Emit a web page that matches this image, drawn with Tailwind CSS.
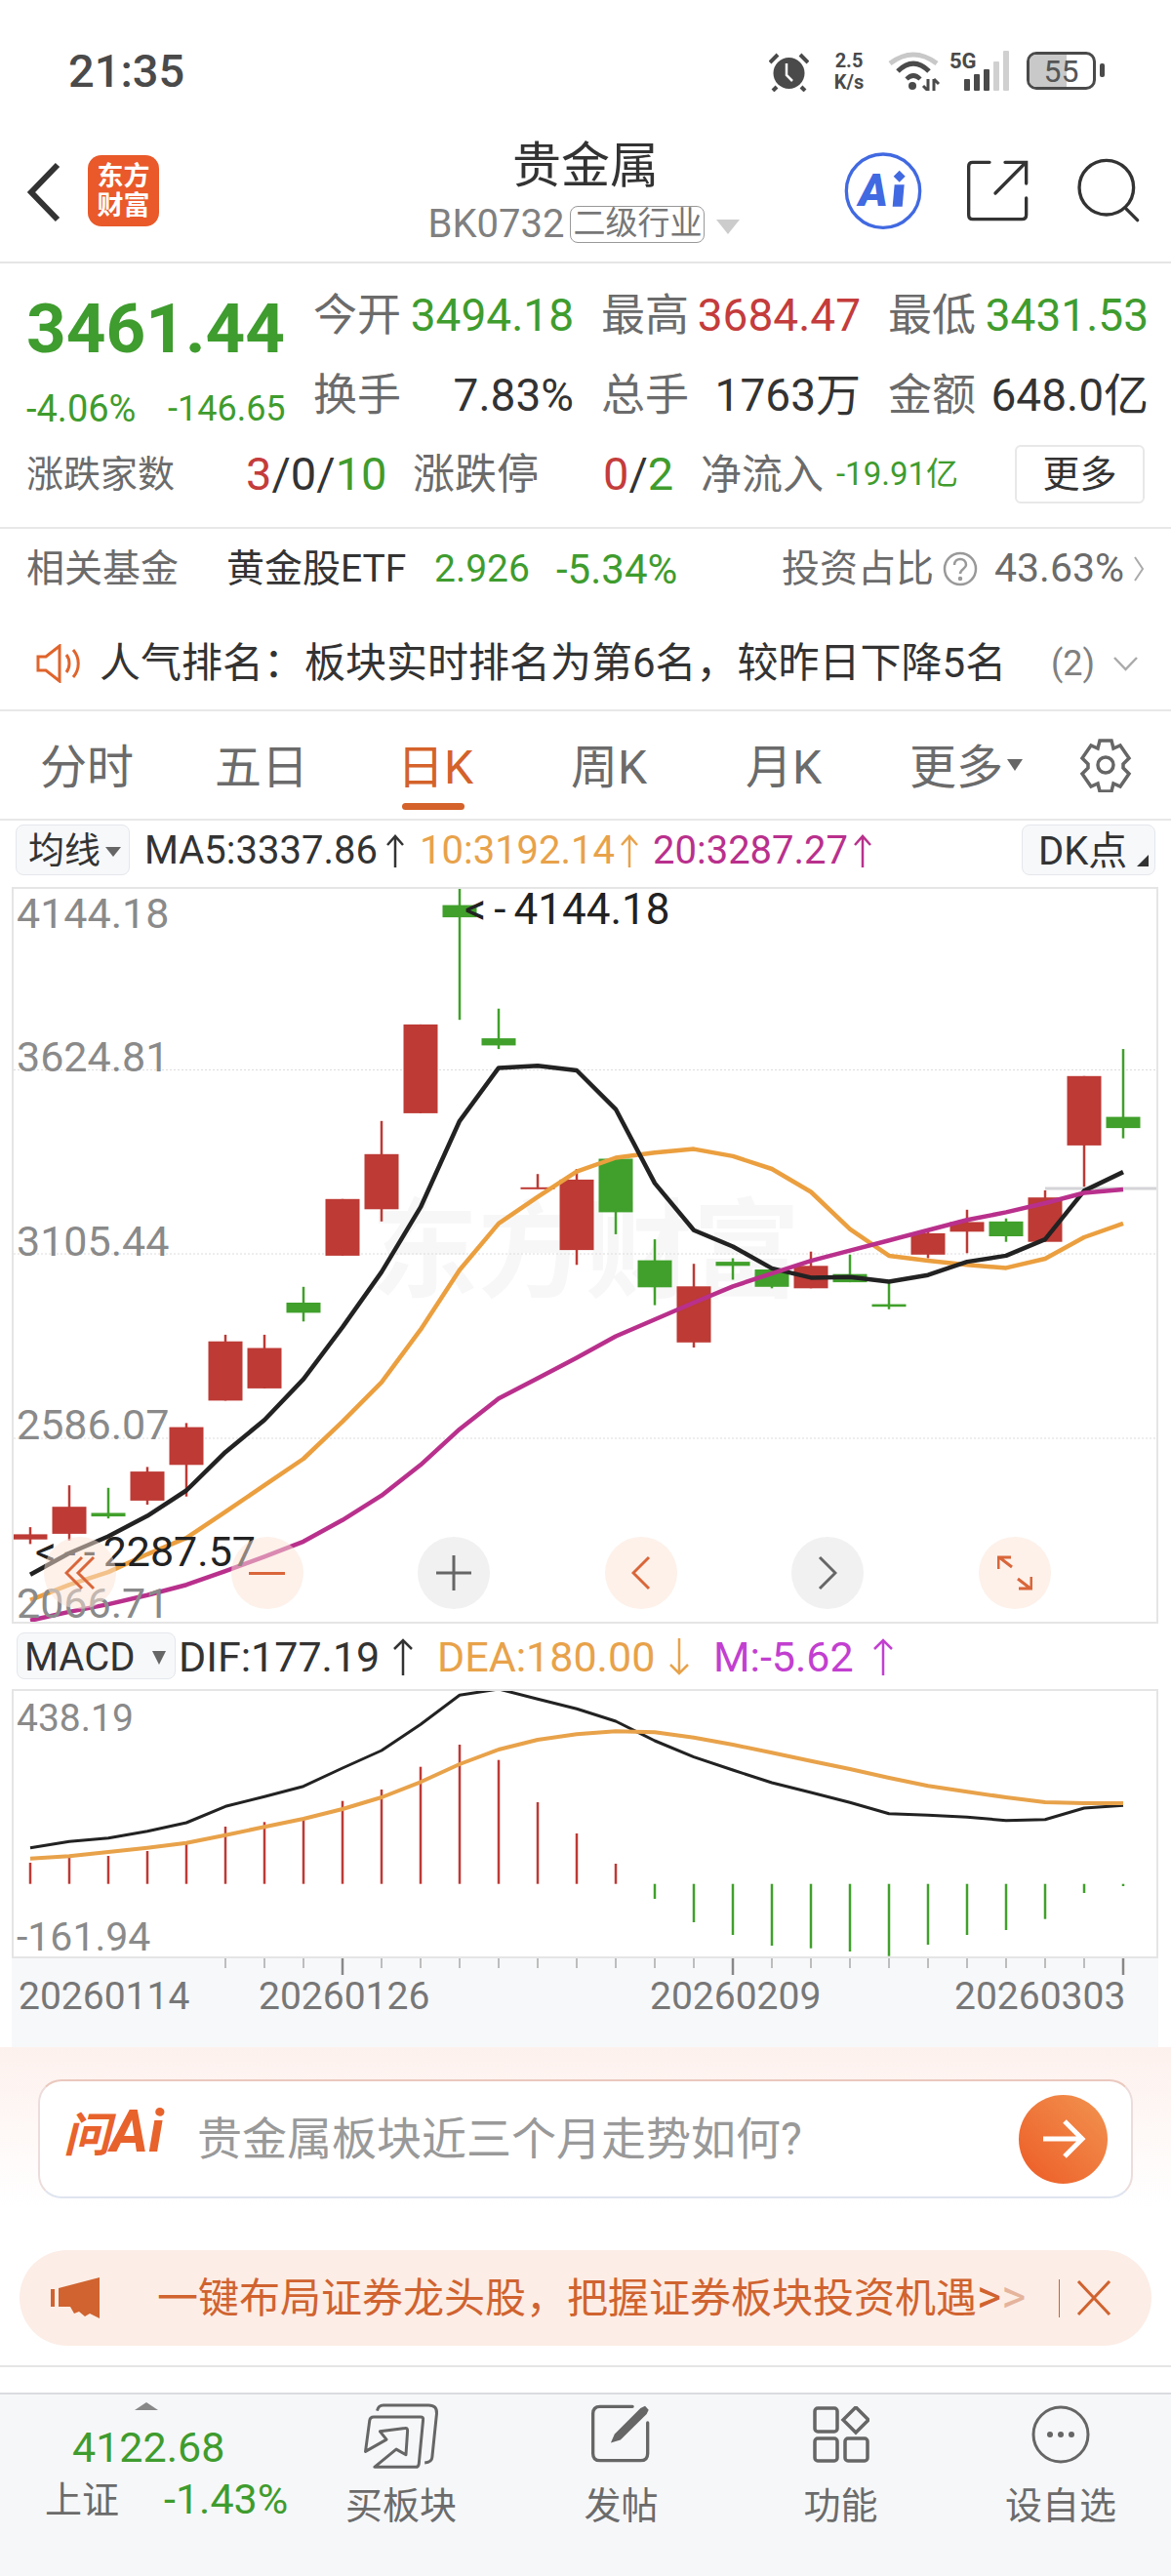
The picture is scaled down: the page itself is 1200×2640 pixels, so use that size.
<!DOCTYPE html>
<html lang="zh-CN">

<head>
    <meta charset="UTF-8">
    <meta name="viewport" content="width=device-width, initial-scale=1.0">
    <title>贵金属</title>
    <script src="https://cdn.jsdelivr.net/npm/@tailwindcss/browser@4"></script>
</head>

<body class="bg-white overflow-hidden font-['Roboto','Noto_Sans_CJK_SC',sans-serif]">

    <div class="w-[1200px] h-[2640px] flex flex-col">

        <!-- status bar -->
        <div class="relative h-[130px] pt-[50px] pl-[70px] text-[#4a4a4a]">
            <span class="text-[47px] leading-[46px] font-medium">21:35</span>
            <svg class="absolute left-[788px] top-[54px] w-[41px] h-[40px]" viewBox="0 0 41 40" fill="#4a4a4a">
                <circle cx="20.500" cy="21" r="16" />
                <path d="M18 11v12l6 6" fill="none" stroke="#fff" stroke-width="2.500" />
                <path d="M1 10 9 2M40 10l-8-8M8 35l-4 4M33 35l4 4" stroke="#4a4a4a" stroke-width="4" />
            </svg>
            <span class="absolute left-[850px] top-[51px] w-[40px] text-center text-[20px] leading-[22px] font-bold">2.5</span>
            <span class="absolute left-[848px] top-[73px] w-[44px] text-center text-[20px] leading-[22px] font-bold">K/s</span>
            <svg class="absolute left-[910px] top-[53px] w-[54px] h-[40px]" viewBox="0 0 54 40" fill="none">
                <path d="M2 12Q26-6 50 12" stroke="#c8c8c8" stroke-width="5" />
                <path d="M10 20Q26 4 42 20" stroke="#4a4a4a" stroke-width="5" />
                <path d="M19 28Q26 21 33 28" stroke="#4a4a4a" stroke-width="4.500" />
                <circle cx="25" cy="35" r="4" fill="#4a4a4a" />
                <path d="M41 40V28M36 35l5 5M47 40V28M52 33l-5-5" stroke="#4a4a4a" stroke-width="3" />
            </svg>
            <span class="absolute left-[973px] top-[51px] text-[22px] leading-[24px] font-bold">5G</span>
            <svg class="absolute left-[988px] top-[52px] w-[46px] h-[41px]" viewBox="0 0 46 41" fill="#4a4a4a">
                <rect x="0" y="29" width="6" height="12" rx="1" />
                <rect x="10" y="24" width="6" height="17" rx="1" />
                <rect x="20" y="19" width="6" height="22" rx="1" />
                <rect x="30" y="11" width="6" height="30" rx="1" fill="#d0d0d0" />
                <rect x="40" y="0" width="6" height="41" rx="1" fill="#d0d0d0" />
            </svg>
            <div class="absolute left-[1052px] top-[53px] w-[71px] h-[39px] rounded-[10px] border-[3px] border-[#4a4a4a]">
                <div class="absolute left-0 top-0 h-full w-[38px] rounded-l-[7px] bg-[#c9c9c9]"></div>
                <span class="absolute left-0 right-0 top-[3px] h-[28px] flex items-center justify-center text-[32px] leading-[28px] text-[#555]">55</span>
            </div>
            <div class="absolute left-[1127px] top-[65px] w-[5px] h-[14px] rounded-[2px] bg-[#4a4a4a]"></div>
        </div>

        <!-- header -->
        <div class="relative h-[140px] border-b-2 border-[#e5e5e5] shrink-0">
            <svg class="absolute left-[26px] top-[36px] w-[40px] h-[62px]" viewBox="0 0 40 62" fill="none" stroke="#333" stroke-width="6">
                <path d="M33 3 6 31l27 28" />
            </svg>
            <div class="absolute left-[90px] top-[29px] w-[73px] h-[73px] rounded-[14px] bg-[#e9592a] text-white text-[27px] leading-[30px] font-bold flex flex-col items-center justify-center">
                <span>东方</span>
                <span>财富</span>
            </div>
            <div class="absolute left-0 right-0 top-[14px] flex flex-col items-center">
                <span class="text-[50px] leading-[52px] text-[#333]">贵金属</span>
                <div class="mt-[14px] flex items-center ml-[-3px]">
                    <span class="text-[40px] leading-[40px] text-[#808080]">BK0732</span>
                    <span class="ml-[6px] w-[138px] h-[38px] rounded-[8px] border border-[#999] text-[33px] leading-[34px] text-[#777] text-center">二级行业</span>
                    <div class="ml-[12px] mt-[4px] w-0 h-0 border-x-[12px] border-x-transparent border-t-[15px] border-t-[#ccc]"></div>
                </div>
            </div>
            <svg class="absolute left-[860px] top-[20px] w-[90px] h-[90px]" viewBox="0 0 270 270" fill="none">
                <circle cx="135" cy="137" r="113" stroke="#4169e1" stroke-width="10" />
                <text x="60" y="182" font-size="136" font-weight="900" font-style="italic" fill="#4169e1" font-family="Roboto">A</text>
                <path d="M170 118h30l-6 67h-30z" fill="#4169e1" />
                <path d="M185 74l18 18-18 18-18-18z" fill="#4169e1" />
            </svg>
            <svg class="absolute left-[990px] top-[33px] w-[65px] h-[65px]" viewBox="390 40 195 195" fill="none" stroke="#333" stroke-width="10" stroke-linecap="round">
                <path d="M462 50H410Q398 50 398 62V212Q398 225 410 225H562Q575 225 575 212V160" />
                <path d="M510 50H575V115M480 145 572 52" />
            </svg>
            <svg class="absolute left-[1102px] top-[32px] w-[67px] h-[67px]" viewBox="725 35 200 200" fill="none" stroke="#333" stroke-width="10" stroke-linecap="round">
                <circle cx="820" cy="125" r="83" />
                <path d="M880 190l35 35" />
            </svg>
        </div>

        <!-- quote -->
        <div class="h-[270px] flex flex-col shrink-0">
            <div class="flex h-[172px]">
                <div class="w-[321px] pl-[27px]">
                    <div class="mt-[31px] text-[71px] leading-[72px] font-bold text-[#3f9c2e]">3461.44</div>
                    <div class="mt-[28px] flex items-center h-[36px] text-[#3f9c2e]">
                        <span class="w-[145px] text-[38px] leading-[36px]">-4.06%</span>
                        <span class="text-[36px] leading-[36px]">-146.65</span>
                    </div>
                </div>
                <div class="pt-[31px] grid grid-cols-[267px_266px_267px] gap-x-[28px] gap-y-[37px] h-fit leading-[45px] w-[851px]">
                    <div class="flex justify-between"><span class="text-[45px] text-[#6b6b6b]">今开</span><span class="text-[46px] text-[#3f9c2e]">3494.18</span></div>
                    <div class="flex justify-between"><span class="text-[45px] text-[#6b6b6b]">最高</span><span class="text-[46px] text-[#c43c3c]">3684.47</span></div>
                    <div class="flex justify-between"><span class="text-[45px] text-[#6b6b6b]">最低</span><span class="text-[46px] text-[#3f9c2e]">3431.53</span></div>
                    <div class="flex justify-between"><span class="text-[45px] text-[#6b6b6b]">换手</span><span class="text-[46px] text-[#333]">7.83%</span></div>
                    <div class="flex justify-between"><span class="text-[45px] text-[#6b6b6b]">总手</span><span class="text-[46px] text-[#333]">1763万</span></div>
                    <div class="flex justify-between"><span class="text-[45px] text-[#6b6b6b]">金额</span><span class="text-[46px] text-[#333]">648.0亿</span></div>
                </div>
            </div>
            <div class="flex items-center h-[60px] mt-[14px] pl-[27px]">
                <span class="w-[225px] text-[38px] text-[#6b6b6b]">涨跌家数</span>
                <span class="w-[171px] text-[47px]"><span class="text-[#c43c3c]">3</span><span class="text-[#333]">/0/</span><span class="text-[#3f9c2e]">10</span></span>
                <span class="w-[195px] text-[43px] text-[#6b6b6b]">涨跌停</span>
                <span class="w-[100px] text-[47px]"><span class="text-[#c43c3c]">0</span><span class="text-[#333]">/</span><span class="text-[#3f9c2e]">2</span></span>
                <span class="w-[139px] text-[42px] text-[#6b6b6b]">净流入</span>
                <span class="w-[183px] text-[33px] text-[#3f9c2e]">-19.91亿</span>
                <div class="w-[133px] h-[60px] rounded-[6px] border-2 border-[#e8e8e8] flex items-center justify-center text-[38px] text-[#333]">更多</div>
            </div>
        </div>

        <!-- fund and ranking rows -->
        <div class="h-[189px] border-t-2 border-b-2 border-[#e8e8e8] flex flex-col shrink-0">
            <div class="flex items-center h-[82px] pl-[27px]">
                <span class="w-[205px] text-[39px] text-[#6b6b6b]">相关基金</span>
                <span class="w-[213px] text-[39px] text-[#333]">黄金股ETF</span>
                <span class="w-[125px] text-[39px] text-[#3f9c2e]">2.926</span>
                <span class="w-[231px] text-[42px] text-[#3f9c2e]">-5.34%</span>
                <span class="w-[165px] text-[39px] text-[#6b6b6b]">投资占比</span>
                <svg class="w-[36px] h-[36px]" viewBox="0 0 36 36" fill="none" stroke="#999" stroke-width="2.500">
                    <circle cx="18" cy="18" r="16" />
                    <path d="M12 14c0-8 12-8 12 0 0 4-6 4-6 9" />
                    <circle cx="18" cy="28" r="1" />
                </svg>
                <span class="ml-[17px] w-[142px] text-[41px] text-[#6b6b6b]">43.63%</span>
                <svg class="w-[12px] h-[28px]" viewBox="0 0 12 28" fill="none" stroke="#aaa" stroke-width="2">
                    <path d="M2 2l8 12-8 12" />
                </svg>
            </div>
            <div class="flex items-center h-[103px] pt-[8px] pl-[37px]">
                <svg class="w-[46px] h-[40px]" viewBox="0 0 46 40" fill="none" stroke="#e0642c" stroke-width="3">
                    <path d="M2 13h8L24 2v36L10 27H2zM31 11c4 5 4 13 0 18M38 6c7 8 7 20 0 28" />
                </svg>
                <span class="ml-[19px] w-[975px] text-[42px] text-[#333] whitespace-nowrap">人气排名：板块实时排名为第6名，较昨日下降5名</span>
                <span class="w-[63px] text-[36px] text-[#808080]">(2)</span>
                <svg class="w-[27px] h-[16px]" viewBox="0 0 27 16" fill="none" stroke="#aaa" stroke-width="2.500">
                    <path d="M2 2l11.500 12L25 2" />
                </svg>
            </div>
        </div>

        <!-- period tabs -->
        <div class="relative h-[112px] border-b-2 border-[#e8e8e8] flex items-center pl-[41px] pt-[6px] text-[48px] text-[#6b6b6b] shrink-0">
            <span class="w-[179px]">分时</span>
            <span class="w-[187px]">五日</span>
            <span class="w-[178px] text-[#d4622a]">日K</span>
            <span class="w-[179px]">周K</span>
            <span class="w-[168px]">月K</span>
            <span class="w-[100px]">更多</span>
            <div class="-mt-[6px] w-0 h-0 border-x-[8px] border-x-transparent border-t-[12px] border-t-[#666]"></div>
            <svg class="ml-[58px] -mt-[6px] w-[54px] h-[56px]" viewBox="0 0 54 56" fill="none" stroke="#666" stroke-width="3.500">
                <path d="M21 2h12l2 8 7-3 9 13-6 6v4l6 6-9 13-7-3-2 8H21l-2-8-7 3-9-13 6-6v-4l-6-6 9-13 7 3z" transform="translate(0 1)" />
                <circle cx="27" cy="28" r="8" />
            </svg>
            <div class="absolute left-[412px] top-[94px] w-[64px] h-[7px] rounded-full bg-[#d4622a]"></div>
        </div>

        <!-- moving average row -->
        <div class="relative h-[68px] shrink-0 flex items-center text-[40px] leading-[40px] pb-[6px]">
            <div class="absolute left-[16px] top-[4px] w-[117px] h-[52px] rounded-[8px] border border-[#e4e7ec] bg-[#f7f8fa] flex items-center pl-[12px] pt-[4px] text-[#333] text-[37px]">
                均线
                <div class="ml-[5px] w-0 h-0 border-x-[8px] border-x-transparent border-t-[10px] border-t-[#666]"></div>
            </div>
            <span class="ml-[148px] w-[240px] text-[#333] whitespace-nowrap">MA5:3337.86</span>
            <svg class="ml-[7px] w-[20px] h-[34px]" viewBox="0 0 20 34" fill="none" stroke="#333" stroke-width="2.500"><path d="M10 34V2M2 11l8-9 8 9" /></svg>
            <span class="ml-[15px] w-[194px] text-[#e8a24a] whitespace-nowrap">10:3192.14</span>
            <svg class="ml-[11px] w-[20px] h-[34px]" viewBox="0 0 20 34" fill="none" stroke="#e8a24a" stroke-width="2.500"><path d="M10 34V2M2 11l8-9 8 9" /></svg>
            <span class="ml-[14px] w-[196px] text-[#b9308c] whitespace-nowrap">20:3287.27</span>
            <svg class="ml-[9px] w-[20px] h-[34px]" viewBox="0 0 20 34" fill="none" stroke="#b9308c" stroke-width="2.500"><path d="M10 34V2M2 11l8-9 8 9" /></svg>
            <div class="absolute left-[1047px] top-[4px] w-[137px] h-[52px] rounded-[8px] border border-[#e4e7ec] bg-[#f7f8fa] flex items-center pl-[16px] pt-[4px] text-[#333]">
                DK点
                <div class="absolute right-[6px] bottom-[8px] w-0 h-0 border-l-[12px] border-l-transparent border-b-[12px] border-b-[#333]"></div>
            </div>
        </div>

        <!-- candlestick chart -->
        <div class="relative ml-[12px] w-[1175px] h-[755px] border-2 border-[#e5e5e5] shrink-0">
            <div class="absolute left-[366px] top-[318px] whitespace-nowrap text-[110px] leading-[110px] font-bold text-[#f7f7f7]">东方财富</div>
            <svg id="kline" class="absolute left-0 top-0" width="1171" height="751" viewBox="0 0 1171 751"></svg>
            <div class="text-[43px] leading-[38px] text-[#8a8a8a]">
                <span class="absolute left-[3px] top-[6px]">4144.18</span>
                <span class="absolute left-[3px] top-[153px]">3624.81</span>
                <span class="absolute left-[3px] top-[342px]">3105.44</span>
                <span class="absolute left-[3px] top-[530px]">2586.07</span>
                <span class="absolute left-[3px] top-[713px]">2066.71</span>
            </div>
            <span class="absolute left-[462px] top-[2px] text-[44px] leading-[38px] text-[#222] whitespace-nowrap"><span class="tracking-[8px]">&lt;-</span>4144.18</span>
            <span class="absolute left-[22px] top-[660px] text-[43px] leading-[38px] text-[#222] whitespace-nowrap"><span class="tracking-[8px]">&lt;--</span>2287.57</span>
            <!-- buttons over the chart -->
            <div class="absolute left-[31px] top-[664px] flex gap-[117.600px]">
                <div class="w-[74px] h-[74px] rounded-full bg-[#fbe3d6]/50 flex items-center justify-center">
                    <svg class="w-[32px] h-[36px]" viewBox="0 0 32 36" fill="none" stroke="#d9663a" stroke-width="3"><path d="M18 2 2 18l16 16M30 2 14 18l16 16" /></svg>
                </div>
                <div class="w-[74px] h-[74px] rounded-full bg-[#fbe3d6]/50 flex items-center justify-center">
                    <div class="w-[37px] h-[3px] bg-[#d9663a]"></div>
                </div>
                <div class="w-[74px] h-[74px] rounded-full bg-[#e8e8e8]/60 flex items-center justify-center">
                    <svg class="w-[36px] h-[36px]" viewBox="0 0 36 36" fill="none" stroke="#666" stroke-width="3"><path d="M0 18h36M18 0v36" /></svg>
                </div>
                <div class="w-[74px] h-[74px] rounded-full bg-[#fbe3d6]/50 flex items-center justify-center">
                    <svg class="w-[20px] h-[36px]" viewBox="0 0 20 36" fill="none" stroke="#d9663a" stroke-width="3"><path d="M18 2 2 18l16 16" /></svg>
                </div>
                <div class="w-[74px] h-[74px] rounded-full bg-[#e8e8e8]/60 flex items-center justify-center">
                    <svg class="w-[20px] h-[36px]" viewBox="0 0 20 36" fill="none" stroke="#666" stroke-width="3"><path d="M2 2l16 16L2 34" /></svg>
                </div>
                <div class="w-[74px] h-[74px] rounded-full bg-[#fbe3d6]/50 flex items-center justify-center">
                    <svg class="w-[36px] h-[36px]" viewBox="0 0 36 36" fill="none" stroke="#d9663a" stroke-width="3"><path d="M1 14V2h13M2 2l13 10M35 22v12H22M34 34 21 24" /></svg>
                </div>
            </div>
        </div>

        <!-- macd row -->
        <div class="relative h-[67px] shrink-0 flex items-center text-[43px] leading-[40px]">
            <div class="absolute left-[17px] top-[9px] w-[163px] h-[48px] rounded-[8px] border border-[#e4e7ec] bg-[#f7f8fa] flex items-center pl-[7px] pt-[3px] text-[40px] text-[#333]">
                MACD
                <div class="ml-[18px] w-0 h-0 border-x-[7px] border-x-transparent border-t-[14px] border-t-[#666]"></div>
            </div>
            <span class="ml-[183px] w-[209px] text-[#333] whitespace-nowrap">DIF:177.19</span>
            <svg class="ml-[10px] w-[22px] h-[38px]" viewBox="0 0 22 38" fill="none" stroke="#333" stroke-width="2.500"><path d="M11 38V2M2 11l9-9 9 9" /></svg>
            <span class="ml-[24px] w-[227px] text-[#e8a24a] whitespace-nowrap">DEA:180.00</span>
            <svg class="ml-[10px] w-[22px] h-[38px]" viewBox="0 0 22 38" fill="none" stroke="#e8a24a" stroke-width="2.500"><path d="M11 0v36M2 27l9 9 9-9" /></svg>
            <span class="ml-[24px] w-[153px] text-[#c23fd0] whitespace-nowrap">M:-5.62</span>
            <svg class="ml-[10px] w-[22px] h-[38px]" viewBox="0 0 22 38" fill="none" stroke="#c23fd0" stroke-width="2.500"><path d="M11 38V2M2 11l9-9 9 9" /></svg>
        </div>

        <!-- macd chart -->
        <div class="relative ml-[12px] w-[1175px] h-[276px] border-2 border-[#e5e5e5] shrink-0">
            <svg id="macd" class="absolute left-0 top-0" width="1171" height="272" viewBox="0 0 1171 272"></svg>
            <span class="absolute left-[3px] top-[8px] text-[39px] leading-[40px] text-[#8a8a8a]">438.19</span>
            <span class="absolute left-[3px] top-[232px] text-[41px] leading-[40px] text-[#8a8a8a]">-161.94</span>
        </div>

        <!-- date axis -->
        <div class="relative ml-[12px] w-[1175px] h-[91px] bg-[#f7f8fa] shrink-0">
            <svg id="ticks" class="absolute left-0 top-0" width="1175" height="24" viewBox="0 0 1175 24"></svg>
            <div class="absolute left-0 top-[19px] text-[39px] leading-[40px] text-[#777]">
                <span class="absolute left-[7px] top-0">20260114</span>
                <span class="absolute left-[253px] top-0">20260126</span>
                <span class="absolute left-[654px] top-0">20260209</span>
                <span class="absolute left-[966px] top-0">20260303</span>
            </div>
        </div>

        <!-- ask box and banner -->
        <div class="h-[328px] border-b-2 border-[#e5e5e5] bg-linear-to-b from-[#fdf1ed] to-white to-50% shrink-0 pt-[33px]">
            <div class="ml-[39px] w-[1122px] h-[122px] rounded-[24px] border-2 border-t-[#eac8be] border-x-[#ecdcdc] border-b-[#dfe5ef] bg-white flex items-center pl-[24px]">
                <span class="w-[137px] font-bold italic text-[#e8622c] whitespace-nowrap leading-[58px]"><span class="text-[48px]">问</span><span class="text-[60px]">Ai</span></span>
                <span class="w-[842px] text-[46px] text-[#999] whitespace-nowrap">贵金属板块近三个月走势如何?</span>
                <div class="w-[91px] h-[91px] rounded-full bg-linear-to-tr from-[#ec5a24] to-[#f19350] flex items-center justify-center">
                    <svg class="w-[46px] h-[42px]" viewBox="0 0 46 42" fill="none" stroke="#fff" stroke-width="5"><path d="M2 21h40M24 3l18 18-18 18" /></svg>
                </div>
            </div>
            <div class="ml-[20px] mt-[53px] w-[1160px] h-[98px] rounded-full bg-[#fcede6] flex items-center pl-[32px] text-[#d0632f]">
                <svg class="w-[50px] h-[42px]" viewBox="0 0 50 42" fill="#d0632f">
                    <path d="M0 12h4v18H0zM8 11 50 0v42l-10-5-5 3-6-5-5 2-4-7H8z" />
                </svg>
                <span class="ml-[59px] w-[924px] text-[42px] whitespace-nowrap">一键布局证券龙头股，把握证券板块投资机遇<span class="text-[48px] leading-[42px]">&gt;<span class="text-[#e5b49c]">&gt;</span></span></span>
                <div class="w-px h-[39px] bg-[#d0632f]"></div>
                <svg class="ml-[17px] w-[36px] h-[36px]" viewBox="0 0 36 36" fill="none" stroke="#d0632f" stroke-width="3"><path d="M2 1l32 34M34 1 2 35" /></svg>
            </div>
        </div>

        <div class="h-[26px] shrink-0"></div>

        <!-- bottom tab bar -->
        <div class="relative flex-1 border-t-2 border-[#d8dbe0] bg-[#f6f7f9]">
            <div class="absolute left-[138px] top-[8px] w-0 h-0 border-x-[12px] border-x-transparent border-b-[8px] border-b-[#888]"></div>
            <span class="absolute left-[74px] top-[32px] text-[43px] leading-[44px] text-[#3f9c2e]">4122.68</span>
            <span class="absolute left-[46px] top-[86px] text-[38px] leading-[44px] text-[#6b6b6b]">上证</span>
            <span class="absolute left-[168px] top-[85px] text-[43px] leading-[44px] text-[#3f9c2e]">-1.43%</span>

            <div class="absolute left-[298px] top-[8px] flex">
                <div class="w-[226px] flex flex-col items-center">
                    <svg class="w-[80px] h-[68px]" viewBox="90 20 240 205" fill="none" stroke="#666" stroke-width="9" stroke-linejoin="round">
                        <path d="M136 46Q140 29 155 29H295Q322 29 320 55L306 190Q305 205 283 207" />
                        <path d="M100 172 113 75Q115 65 125 65H270Q280 65 278 75L265 210Q264 220 255 220H128L195 165 225 182 230 108Q230 98 222 100L145 110 165 135Z" />
                    </svg>
                    <span class="mt-[18px] text-[38px] leading-[40px] text-[#6b6b6b]">买板块</span>
                </div>
                <div class="w-[225px] flex flex-col items-center">
                    <svg class="w-[63px] h-[63px] mt-[1px] mb-[4px]" viewBox="795 30 190 190" fill="none" stroke="#666" stroke-width="10" stroke-linecap="round">
                        <path d="M925 40H825Q803 40 803 62V185Q803 207 825 207H950Q972 207 972 185V90" />
                        <path d="M858 152 870 125 950 45 964 38 975 50 969 63 888 143Z" fill="#666" stroke="none" />
                    </svg>
                    <span class="mt-[18px] text-[38px] leading-[40px] text-[#6b6b6b]">发帖</span>
                </div>
                <div class="w-[225px] flex flex-col items-center">
                    <svg class="w-[58px] h-[58px] mt-[4px] mb-[6px]" viewBox="0 0 58 58" fill="none" stroke="#666" stroke-width="3.500">
                        <rect x="2" y="2" width="23" height="24" rx="3" />
                        <path d="M44 1l13 13-13 13-13-13z" />
                        <rect x="2" y="33" width="23" height="23" rx="3" />
                        <rect x="33" y="33" width="23" height="23" rx="3" />
                    </svg>
                    <span class="mt-[18px] text-[38px] leading-[40px] text-[#6b6b6b]">功能</span>
                </div>
                <div class="w-[226px] flex flex-col items-center">
                    <svg class="w-[60px] h-[60px] mt-[3px] mb-[5px]" viewBox="0 0 60 60" fill="#666">
                        <circle cx="30" cy="30" r="28" fill="none" stroke="#666" stroke-width="3" />
                        <circle cx="19" cy="30" r="3" />
                        <circle cx="30" cy="30" r="3" />
                        <circle cx="41" cy="30" r="3" />
                    </svg>
                    <span class="mt-[18px] text-[38px] leading-[40px] text-[#6b6b6b]">设自选</span>
                </div>
            </div>
        </div>
    </div>

    <script>
        // candle: [red?, wick top, body top, body bottom, wick bottom], read off the screenshot
        const candles = [
            [1, 1352, 1366, 1376, 1385], [1, 1270, 1312, 1365, 1378], [0, 1275, 1324, 1331, 1335],
            [1, 1234, 1243, 1300, 1308], [1, 1148, 1156, 1230, 1292], [1, 975, 988, 1104, 1104],
            [1, 975, 1001, 1080, 1080], [0, 881, 912, 932, 949], [1, 709, 709, 820, 820],
            [1, 556, 621, 729, 753], [1, 367, 367, 541, 541], [0, 97, 133, 157, 358],
            [0, 336, 394, 408, 415], [1, 660, 686, 689, 689], [1, 650, 671, 809, 838],
            [0, 630, 630, 735, 778], [0, 788, 829, 882, 917], [1, 836, 880, 990, 1000],
            [0, 825, 832, 840, 867], [0, 847, 847, 881, 884], [1, 812, 840, 884, 884],
            [0, 818, 856, 872, 872], [0, 872, 915, 920, 925], [1, 770, 776, 818, 825],
            [1, 730, 754, 773, 815], [0, 747, 753, 782, 793], [1, 692, 706, 793, 793],
            [1, 468, 468, 604, 685], [0, 415, 548, 570, 590]
        ];
        const ma5 = [1445, 1403, 1370, 1330, 1280, 1205, 1142, 1062, 960, 852, 725, 556, 452, 448, 457, 533, 678, 770, 802, 845, 863, 862, 871, 858, 832, 820, 788, 693, 656];
        const ma10 = [1495, 1465, 1440, 1405, 1373, 1322, 1270, 1218, 1145, 1068, 965, 848, 757, 705, 655, 628, 618, 611, 625, 650, 695, 768, 820, 830, 838, 844, 826, 784, 757];
        const ma20 = [1535, 1518, 1503, 1485, 1465, 1438, 1410, 1380, 1338, 1290, 1230, 1160, 1100, 1060, 1020, 978, 945, 912, 880, 855, 830, 810, 790, 770, 750, 735, 717, 697, 690];

        const dif = [707, 688, 677, 656, 630, 580, 550, 518, 462, 408, 328, 238, 219, 250, 280, 318, 378, 428, 468, 507, 537, 568, 602, 607, 613, 623, 620, 585, 577];
        const dea = [740, 733, 720, 707, 692, 668, 643, 618, 588, 552, 505, 450, 405, 375, 358, 349, 352, 368, 390, 415, 440, 465, 492, 517, 535, 552, 567, 570, 570];
        const bars = [753, 735, 732, 717, 692, 642, 628, 615, 563, 528, 458, 390, 437, 567, 663, 756, 864, 936, 975, 1008, 1016, 1026, 1040, 1005, 975, 960, 926, 846, 825];

        const RED = "#bd3a35", GREEN = "#40a02b";
        const klineX = i => 17 + 40 * i;
        const klineY = v => +(v / 1.912 - 53).toFixed(1);
        const macdY = v => +(v / 3 - 75).toFixed(1);

        function polyline(values, toY, color, width) {
            const pts = values.map((v, i) => `${klineX(i)},${toY(v)}`).join(" ");
            return `<polyline points="${pts}" fill="none" stroke="${color}" stroke-width="${width}" stroke-linejoin="round"/>`;
        }

        let html = "";
        [185.5, 374, 563].forEach(y => {
            html += `<line x1="0" x2="1171" y1="${y}" y2="${y}" stroke="#dcdcdc" stroke-width="1" stroke-dasharray="2 2"/>`;
        });
        candles.forEach((c, i) => {
            const color = c[0] ? RED : GREEN;
            const x = klineX(i);
            html += `<line x1="${x}" x2="${x}" y1="${klineY(c[1])}" y2="${klineY(c[4])}" stroke="${color}" stroke-width="2.500"/>`;
            html += `<rect x="${x - 17.5}" y="${klineY(c[2])}" width="35" height="${Math.max(2, klineY(c[3]) - klineY(c[2]))}" fill="${color}"/>`;
        });
        html += `<line x1="1057" x2="1171" y1="307" y2="307" stroke="#d4d4d8" stroke-width="3"/>`;
        html += polyline(ma10, klineY, "#eb9f3f", 4.5);
        html += polyline(ma5, klineY, "#222", 4.5);
        html += polyline(ma20, klineY, "#b9308c", 4.5);
        document.getElementById("kline").innerHTML = html;

        let macdHtml = "";
        const zero = macdY(818);
        bars.forEach((b, i) => {
            const color = b < 818 ? RED : GREEN;
            macdHtml += `<line x1="${klineX(i)}" x2="${klineX(i)}" y1="${zero}" y2="${macdY(b)}" stroke="${color}" stroke-width="2.500"/>`;
        });
        macdHtml += polyline(dif, macdY, "#222", 3);
        macdHtml += polyline(dea, macdY, "#e8a24a", 4);
        document.getElementById("macd").innerHTML = macdHtml;

        let tickHtml = "";
        for (let i = 5; i < 29; i++) {
            const long = i === 8 || i === 18 || i === 28;
            tickHtml += `<line x1="${19 + 40 * i}" x2="${19 + 40 * i}" y1="0" y2="${long ? 17 : 10}" stroke="${long ? "#888" : "#aaa"}" stroke-width="${long ? 2.5 : 1.5}"/>`;
        }
        document.getElementById("ticks").innerHTML = tickHtml;
    </script>

</body>

</html>
